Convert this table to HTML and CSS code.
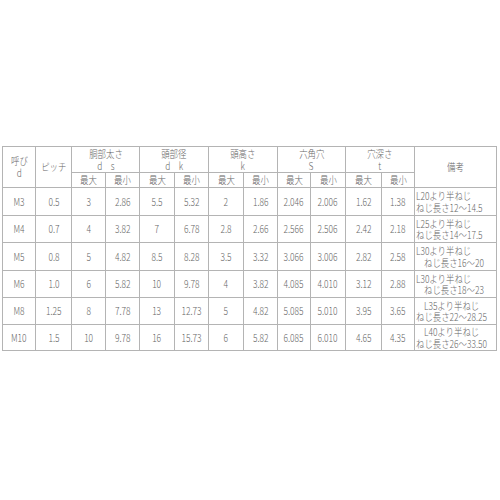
FILE: index.html
```html
<!DOCTYPE html>
<html lang="ja">
<head>
<meta charset="utf-8">
<link rel="stylesheet" href="styles.css">
</head>
<body>
<div class="page">
<table class="spec">
  <colgroup>
    <col class="c33"><col class="c36"><col class="c34"><col class="c34"><col class="c35"><col class="c34"><col class="c35"><col class="c34"><col class="c33"><col class="c35"><col class="c36"><col class="c33"><col class="c82">
  </colgroup>
  <tr class="h1">
    <td rowspan="2"><span class="t">呼び</span><br><span class="t">d</span></td>
    <td rowspan="2"><span class="t">ピッチ</span></td>
    <td colspan="2"><span class="t">胴部太さ</span><br><span class="t">d　s</span></td>
    <td colspan="2"><span class="t">頭部径</span><br><span class="t">d　k</span></td>
    <td colspan="2"><span class="t">頭高さ</span><br><span class="t">k</span></td>
    <td colspan="2"><span class="t">六角穴</span><br><span class="t">S</span></td>
    <td colspan="2"><span class="t">穴深さ</span><br><span class="t">t</span></td>
    <td rowspan="2"><span class="t">備考</span></td>
  </tr>
  <tr class="h2">
    <td><span class="t">最大</span></td><td><span class="t">最小</span></td>
    <td><span class="t">最大</span></td><td><span class="t">最小</span></td>
    <td><span class="t">最大</span></td><td><span class="t">最小</span></td>
    <td><span class="t">最大</span></td><td><span class="t">最小</span></td>
    <td><span class="t">最大</span></td><td><span class="t">最小</span></td>
  </tr>
  <tr class="r28">
    <td><span class="t">M3</span></td><td><span class="t">0.5</span></td>
    <td><span class="t">3</span></td><td><span class="t">2.86</span></td>
    <td><span class="t">5.5</span></td><td><span class="t">5.32</span></td>
    <td><span class="t">2</span></td><td><span class="t">1.86</span></td>
    <td><span class="t">2.046</span></td><td><span class="t">2.006</span></td>
    <td><span class="t">1.62</span></td><td><span class="t">1.38</span></td>
    <td class="note"><span class="l">L20より半ねじ</span><br><span class="l">ねじ長さ12～14.5</span></td>
  </tr>
  <tr class="r27">
    <td><span class="t">M4</span></td><td><span class="t">0.7</span></td>
    <td><span class="t">4</span></td><td><span class="t">3.82</span></td>
    <td><span class="t">7</span></td><td><span class="t">6.78</span></td>
    <td><span class="t">2.8</span></td><td><span class="t">2.66</span></td>
    <td><span class="t">2.566</span></td><td><span class="t">2.506</span></td>
    <td><span class="t">2.42</span></td><td><span class="t">2.18</span></td>
    <td class="note"><span class="l">L25より半ねじ</span><br><span class="l">ねじ長さ14～17.5</span></td>
  </tr>
  <tr class="r28">
    <td><span class="t">M5</span></td><td><span class="t">0.8</span></td>
    <td><span class="t">5</span></td><td><span class="t">4.82</span></td>
    <td><span class="t">8.5</span></td><td><span class="t">8.28</span></td>
    <td><span class="t">3.5</span></td><td><span class="t">3.32</span></td>
    <td><span class="t">3.066</span></td><td><span class="t">3.006</span></td>
    <td><span class="t">2.82</span></td><td><span class="t">2.58</span></td>
    <td class="note"><span class="l">L30より半ねじ</span><br><span class="l ind">ねじ長さ16～20</span></td>
  </tr>
  <tr class="r27">
    <td><span class="t">M6</span></td><td><span class="t">1.0</span></td>
    <td><span class="t">6</span></td><td><span class="t">5.82</span></td>
    <td><span class="t">10</span></td><td><span class="t">9.78</span></td>
    <td><span class="t">4</span></td><td><span class="t">3.82</span></td>
    <td><span class="t">4.085</span></td><td><span class="t">4.010</span></td>
    <td><span class="t">3.12</span></td><td><span class="t">2.88</span></td>
    <td class="note"><span class="l">L30より半ねじ</span><br><span class="l ind">ねじ長さ18～23</span></td>
  </tr>
  <tr class="r27">
    <td><span class="t">M8</span></td><td><span class="t">1.25</span></td>
    <td><span class="t">8</span></td><td><span class="t">7.78</span></td>
    <td><span class="t">13</span></td><td><span class="t">12.73</span></td>
    <td><span class="t">5</span></td><td><span class="t">4.82</span></td>
    <td><span class="t">5.085</span></td><td><span class="t">5.010</span></td>
    <td><span class="t">3.95</span></td><td><span class="t">3.65</span></td>
    <td class="note"><span class="l ind">L35より半ねじ</span><br><span class="l">ねじ長さ22～28.25</span></td>
  </tr>
  <tr class="r26">
    <td><span class="t">M10</span></td><td><span class="t">1.5</span></td>
    <td><span class="t">10</span></td><td><span class="t">9.78</span></td>
    <td><span class="t">16</span></td><td><span class="t">15.73</span></td>
    <td><span class="t">6</span></td><td><span class="t">5.82</span></td>
    <td><span class="t">6.085</span></td><td><span class="t">6.010</span></td>
    <td><span class="t">4.65</span></td><td><span class="t">4.35</span></td>
    <td class="note"><span class="l ind">L40より半ねじ</span><br><span class="l">ねじ長さ26～33.50</span></td>
  </tr>
</table>
</div>
</body>
</html>
```

FILE: styles.css
```css
html, body {
  margin: 0;
  padding: 0;
  background: #ffffff;
}

.page {
  width: 500px;
  height: 500px;
  padding: 146px 0 0 2px;
  box-sizing: border-box;
}

.spec {
  border-collapse: collapse;
  table-layout: fixed;
  width: 494px;
  border: 1px solid #2e2e2e;
  font-family: "Noto Sans CJK JP", "Noto Sans", sans-serif;
  font-weight: 300;
  font-size: 10.5px;
  line-height: 12px;
  color: #666666;
}

.spec td {
  border: 1px solid #b4b4b4;
  padding: 0;
  text-align: center;
  vertical-align: middle;
  white-space: nowrap;
  overflow: hidden;
}

.c33 { width: 33px; }
.c34 { width: 34px; }
.c35 { width: 35px; }
.c36 { width: 36px; }
.c82 { width: 82px; }

.h1 { height: 26px; }
.h2 { height: 15px; }
.r28 { height: 28px; }
.r27 { height: 27px; }
.r26 { height: 26px; }

.t {
  display: inline-block;
  transform: scaleX(0.8);
}

.spec td.note {
  text-align: left;
  padding-left: 1px;
  font-size: 10px;
  line-height: 11.5px;
}

.l {
  display: inline-block;
  vertical-align: top;
  transform: scaleX(0.84);
  transform-origin: left center;
}

.l.ind {
  margin-left: 8px;
}
```
